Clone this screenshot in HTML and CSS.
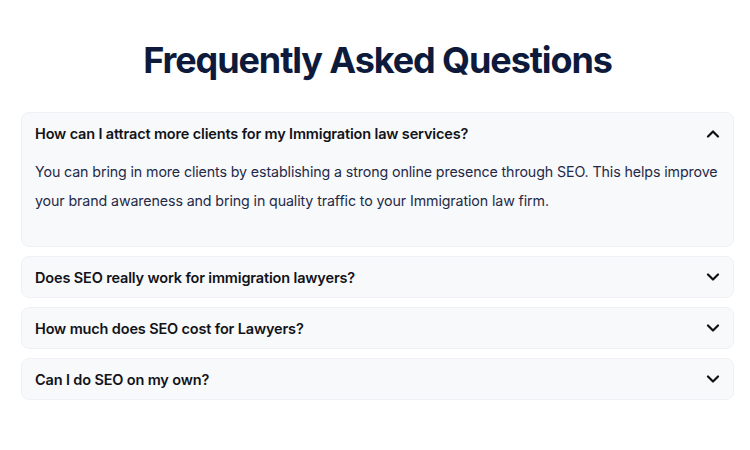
FILE: index.html
```html
<!DOCTYPE html>
<html lang="en">
<head>
<meta charset="utf-8">
<title>FAQ</title>
<link rel="stylesheet" href="styles.css">
</head>
<body>
<section class="faq">
  <h1 class="faq-title">Frequently Asked Questions</h1>
  <div class="faq-list">
    <div class="faq-item open">
      <div class="faq-q">
        <span>How can I attract more clients for my Immigration law services?</span>
        <svg class="chev" viewBox="0 0 14 9" width="14" height="9"><path d="M2 7.5 L7 2.5 L12 7.5" fill="none" stroke="#111" stroke-width="2.2" stroke-linecap="round" stroke-linejoin="round"/></svg>
      </div>
      <p class="faq-a">You can bring in more clients by establishing a strong online presence through SEO. This helps improve your brand awareness and bring in quality traffic to your Immigration law firm.</p>
    </div>
    <div class="faq-item">
      <div class="faq-q">
        <span>Does SEO really work for immigration lawyers?</span>
        <svg class="chev" viewBox="0 0 14 9" width="14" height="9"><path d="M2 1.5 L7 6.5 L12 1.5" fill="none" stroke="#111" stroke-width="2.2" stroke-linecap="round" stroke-linejoin="round"/></svg>
      </div>
    </div>
    <div class="faq-item">
      <div class="faq-q">
        <span>How much does SEO cost for Lawyers?</span>
        <svg class="chev" viewBox="0 0 14 9" width="14" height="9"><path d="M2 1.5 L7 6.5 L12 1.5" fill="none" stroke="#111" stroke-width="2.2" stroke-linecap="round" stroke-linejoin="round"/></svg>
      </div>
    </div>
    <div class="faq-item">
      <div class="faq-q">
        <span>Can I do SEO on my own?</span>
        <svg class="chev" viewBox="0 0 14 9" width="14" height="9"><path d="M2 1.5 L7 6.5 L12 1.5" fill="none" stroke="#111" stroke-width="2.2" stroke-linecap="round" stroke-linejoin="round"/></svg>
      </div>
    </div>
  </div>
</section>
</body>
</html>
```
FILE: styles.css
```css
html, body {
  margin: 0;
  padding: 0;
  background: #ffffff;
}
body {
  font-family: Inter, "Open Sans", "Liberation Sans", sans-serif;
}
.faq {
  padding: 37px 16px 0 21px;
}
.faq-title {
  margin: 0 0 29px;
  text-align: center;
  font-size: 36px;
  line-height: 46px;
  font-weight: 700;
  color: #0e1a3b;
  letter-spacing: -1.1px;
}
.faq-list {
  display: flex;
  flex-direction: column;
  gap: 9px;
}
.faq-item {
  background: #f8f9fb;
  border: 1px solid #f0f1f4;
  border-radius: 8px;
}
.faq-q {
  display: flex;
  align-items: center;
  justify-content: space-between;
  padding: 10px 13px 10px 13px;
  height: 20px;
  font-size: 14.5px;
  font-weight: 600;
  color: #111318;
  letter-spacing: -0.15px;
}
.chev {
  flex: none;
}
.faq-a {
  margin: 0;
  padding: 4px 2px 31px 13px;
  font-size: 14.25px;
  line-height: 29px;
  color: #1f2a48;
  letter-spacing: -0.12px;
}
```
